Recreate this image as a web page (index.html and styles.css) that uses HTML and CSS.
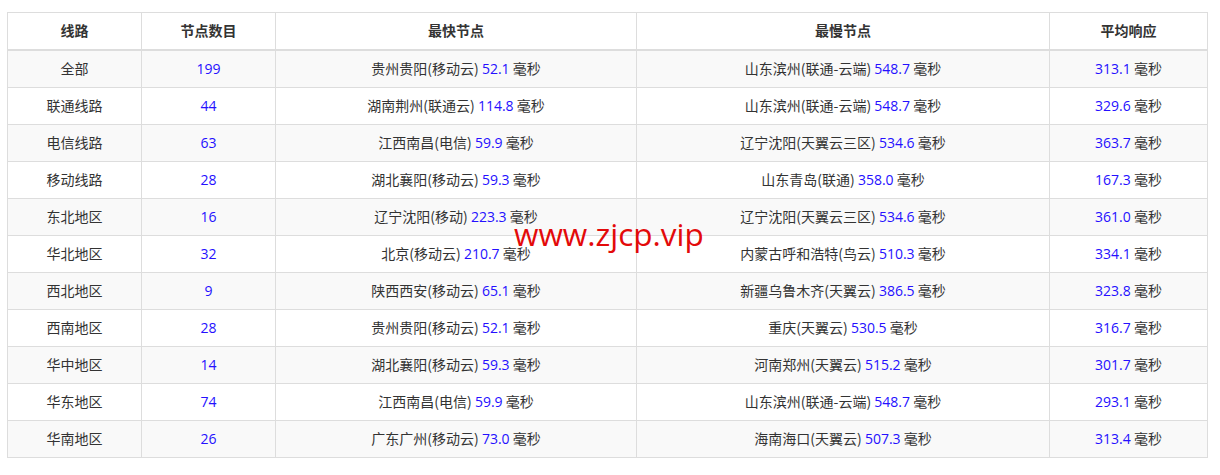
FILE: index.html
```html
<!DOCTYPE html>
<html lang="zh">
<head>
<meta charset="utf-8">
<link rel="stylesheet" href="styles.css">
</head>
<body>
<div class="wrap">
<table class="tbl">
<colgroup>
<col class="c1"><col class="c2"><col class="c3"><col class="c4"><col class="c5">
</colgroup>
<thead>
<tr><th>线路</th><th>节点数目</th><th>最快节点</th><th>最慢节点</th><th>平均响应</th></tr>
</thead>
<tbody>
<tr><td>全部</td><td><span class="n">199</span></td><td>贵州贵阳(移动云) <span class="n">52.1</span> 毫秒</td><td>山东滨州(联通-云端) <span class="n">548.7</span> 毫秒</td><td><span class="n">313.1</span> 毫秒</td></tr>
<tr><td>联通线路</td><td><span class="n">44</span></td><td>湖南荆州(联通云) <span class="n">114.8</span> 毫秒</td><td>山东滨州(联通-云端) <span class="n">548.7</span> 毫秒</td><td><span class="n">329.6</span> 毫秒</td></tr>
<tr><td>电信线路</td><td><span class="n">63</span></td><td>江西南昌(电信) <span class="n">59.9</span> 毫秒</td><td>辽宁沈阳(天翼云三区) <span class="n">534.6</span> 毫秒</td><td><span class="n">363.7</span> 毫秒</td></tr>
<tr><td>移动线路</td><td><span class="n">28</span></td><td>湖北襄阳(移动云) <span class="n">59.3</span> 毫秒</td><td>山东青岛(联通) <span class="n">358.0</span> 毫秒</td><td><span class="n">167.3</span> 毫秒</td></tr>
<tr><td>东北地区</td><td><span class="n">16</span></td><td>辽宁沈阳(移动) <span class="n">223.3</span> 毫秒</td><td>辽宁沈阳(天翼云三区) <span class="n">534.6</span> 毫秒</td><td><span class="n">361.0</span> 毫秒</td></tr>
<tr><td>华北地区</td><td><span class="n">32</span></td><td>北京(移动云) <span class="n">210.7</span> 毫秒</td><td>内蒙古呼和浩特(鸟云) <span class="n">510.3</span> 毫秒</td><td><span class="n">334.1</span> 毫秒</td></tr>
<tr><td>西北地区</td><td><span class="n">9</span></td><td>陕西西安(移动云) <span class="n">65.1</span> 毫秒</td><td>新疆乌鲁木齐(天翼云) <span class="n">386.5</span> 毫秒</td><td><span class="n">323.8</span> 毫秒</td></tr>
<tr><td>西南地区</td><td><span class="n">28</span></td><td>贵州贵阳(移动云) <span class="n">52.1</span> 毫秒</td><td>重庆(天翼云) <span class="n">530.5</span> 毫秒</td><td><span class="n">316.7</span> 毫秒</td></tr>
<tr><td>华中地区</td><td><span class="n">14</span></td><td>湖北襄阳(移动云) <span class="n">59.3</span> 毫秒</td><td>河南郑州(天翼云) <span class="n">515.2</span> 毫秒</td><td><span class="n">301.7</span> 毫秒</td></tr>
<tr><td>华东地区</td><td><span class="n">74</span></td><td>江西南昌(电信) <span class="n">59.9</span> 毫秒</td><td>山东滨州(联通-云端) <span class="n">548.7</span> 毫秒</td><td><span class="n">293.1</span> 毫秒</td></tr>
<tr><td>华南地区</td><td><span class="n">26</span></td><td>广东广州(移动云) <span class="n">73.0</span> 毫秒</td><td>海南海口(天翼云) <span class="n">507.3</span> 毫秒</td><td><span class="n">313.4</span> 毫秒</td></tr>
</tbody>
</table>
<div class="mark">www.zjcp.vip</div>
</div>
</body>
</html>
```
FILE: styles.css
```css
html, body {
  margin: 0;
  padding: 0;
  background: #fff;
}
body {
  font-family: "Noto Sans CJK SC", "Noto Sans", sans-serif;
  font-size: 14px;
  color: #333;
}
.wrap {
  position: relative;
  padding: 12px 0 0 7px;
  width: 1200px;
}
.tbl {
  width: 1200px;
  border-collapse: collapse;
  table-layout: fixed;
}
.c1 { width: 134px; }
.c2 { width: 134px; }
.c3 { width: 361px; }
.c4 { width: 413px; }
.c5 { width: 158px; }
.tbl th, .tbl td {
  border: 1px solid #ddd;
  text-align: center;
  padding: 0 0 2px;
  height: 34px;
  line-height: 20px;
  white-space: nowrap;
}
.tbl th {
  font-weight: bold;
  color: #333;
  border-bottom: 2px solid #ddd;
}
.tbl tbody tr:nth-child(odd) td {
  background: #f9f9f9;
}
.n {
  color: #2510ff;
  font-family: "Open Sans", "Noto Sans", sans-serif;
}
.mark {
  position: absolute;
  left: 514px;
  top: 212px;
  color: #e30a0a;
  font-family: "Open Sans", "Noto Sans", sans-serif;
  font-size: 31.5px;
  line-height: 44px;
  pointer-events: none;
}
```
